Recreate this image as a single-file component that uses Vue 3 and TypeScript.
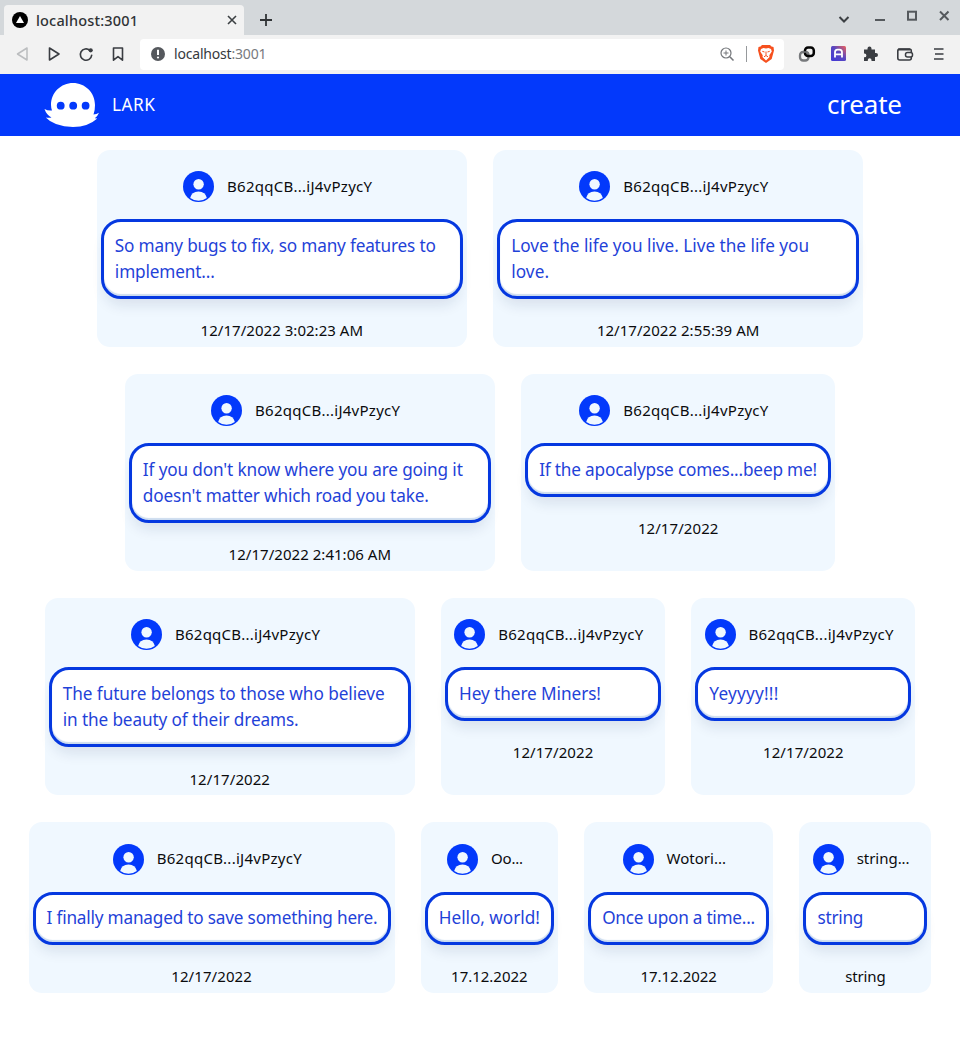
<script setup lang="ts">
interface Line { text: string; width: number }
interface Card { width: number; name: Line; lines: Line[]; date: Line }

const wallet: Line = { text: 'B62qqCB...iJ4vPzycY', width: 145 }
const shortDate: Line = { text: '12/17/2022', width: 80.5 }
const dottedDate: Line = { text: '17.12.2022', width: 76.5 }

const rows: Card[][] = [
  [
    { width: 370, name: wallet, lines: [{ text: 'So many bugs to fix, so many features to', width: 321 }, { text: 'implement...', width: 100 }], date: { text: '12/17/2022 3:02:23 AM', width: 162.5 } },
    { width: 370, name: wallet, lines: [{ text: 'Love the life you live. Live the life you', width: 298 }, { text: 'love.', width: 38 }], date: { text: '12/17/2022 2:55:39 AM', width: 162.5 } },
  ],
  [
    { width: 370, name: wallet, lines: [{ text: "If you don't know where you are going it", width: 320 }, { text: "doesn't matter which road you take.", width: 286 }], date: { text: '12/17/2022 2:41:06 AM', width: 162.5 } },
    { width: 314, name: wallet, lines: [{ text: 'If the apocalypse comes...beep me!', width: 278 }], date: shortDate },
  ],
  [
    { width: 370, name: wallet, lines: [{ text: 'The future belongs to those who believe', width: 322 }, { text: 'in the beauty of their dreams.', width: 236 }], date: shortDate },
    { width: 224, name: wallet, lines: [{ text: 'Hey there Miners!', width: 142 }], date: shortDate },
    { width: 224, name: wallet, lines: [{ text: 'Yeyyyy!!!', width: 69 }], date: shortDate },
  ],
  [
    { width: 366, name: wallet, lines: [{ text: 'I finally managed to save something here.', width: 331 }], date: shortDate },
    { width: 137, name: { text: 'Oo...', width: 32 }, lines: [{ text: 'Hello, world!', width: 101 }], date: dottedDate },
    { width: 189, name: { text: 'Wotori...', width: 59.5 }, lines: [{ text: 'Once upon a time...', width: 153 }], date: dottedDate },
    { width: 132, name: { text: 'string...', width: 53 }, lines: [{ text: 'string', width: 46 }], date: { text: 'string', width: 40.5 } },
  ],
]

// Tracks a line of text so that it occupies the requested width.
const vFit = (el: HTMLElement, binding: { value: number }) => {
  el.style.letterSpacing = '0px'
  const natural = el.getBoundingClientRect().width
  const count = (el.textContent ?? '').length
  const gap = (binding.value - natural) / Math.max(1, count - 1)
  el.style.letterSpacing = `${gap}px`
  el.style.marginRight = `${-gap}px`
}
</script>

<template>
  <div class="window">
    <div class="tabbar">
      <div class="tab">
        <svg class="favicon" width="16" height="16" viewBox="0 0 16 16"><circle cx="8" cy="8" r="8" fill="#000" /><path d="M8 4 12 11H4Z" fill="#fff" /></svg>
        <span class="tab-title"><span v-fit="102" class="fit">localhost:3001</span></span>
        <svg width="10" height="10" viewBox="0 0 10 10"><path d="M1 1 9 9M9 1 1 9" stroke="#3c4043" stroke-width="1.6" /></svg>
      </div>
      <svg class="plus" width="12" height="12" viewBox="0 0 12 12"><path d="M6 0V12M0 6H12" stroke="#303336" stroke-width="1.8" /></svg>
      <svg class="controls" width="112" height="20" viewBox="0 0 112 20" fill="none" stroke="#55595d" stroke-width="2">
        <path d="M1.5 12 6 16.5 10.500 12" stroke="#3c4043" />
        <path d="M37 15H47" /><rect x="70" y="6.700" width="8" height="8" /><path d="M102 6.500 110.500 15M110.500 6.500 102 15" />
      </svg>
    </div>

    <div class="toolbar">
      <svg class="nav" width="112" height="20" viewBox="0 0 112 20" fill="none" stroke-linejoin="round">
        <path d="M11 4V16L1.500 10Z" stroke="#bbbdbf" stroke-width="1.5" />
        <path d="M33.500 4V16L43 10Z" stroke="#3a3d42" stroke-width="1.6" />
        <path d="M73.800 6.300A5.700 5.700 0 1 0 75.700 11.200" stroke="#3a3d42" stroke-width="1.6" stroke-linecap="round" />
        <circle cx="74.700" cy="6.300" r="2.100" fill="#3a3d42" />
        <path d="M97.500 4H106.500V16.200L102 12.600 97.500 16.200Z" stroke="#3a3d42" stroke-width="1.6" />
      </svg>
      <div class="address">
        <svg width="14" height="14" viewBox="0 0 14 14"><circle cx="7" cy="7" r="7" fill="#55585d" /><path d="M7 2.800V8" stroke="#fff" stroke-width="2" /><circle cx="7" cy="10.500" r="1.100" fill="#fff" /></svg>
        <span class="url"><span v-fit="92.5" class="fit">localhost<span class="port">:3001</span></span></span>
        <svg class="magnify" width="15" height="15" viewBox="0 0 15 15" fill="none" stroke="#74777b"><circle cx="6" cy="6" r="5" stroke-width="1.200" /><path d="M9.800 9.800 13.500 13.500" stroke-width="1.600" /><path d="M3.500 6H8.500M6 3.500V8.500" /></svg>
        <span class="rule"></span>
        <svg class="shield" width="18" height="20" viewBox="0 0 18 20">
          <path d="M5 1H13L14.500 2.600 16.500 3 17 6.500 14.700 15 9 19 3.300 15 1 6.500 1.500 3 3.500 2.600Z" fill="#f6501e" />
          <path d="M4 5 6.500 4 9 4.500 11.500 4 14 5 14.800 7.500 12.300 11.300 12.500 13 9 16.500 5.500 13 5.700 11.300 3.200 7.500Z" fill="#fff" />
          <path d="M5.300 7.300 7.500 8M12.700 7.300 10.500 8M9 7.500V11.300M7 12.800 9 11.500 11 12.800" fill="none" stroke="#f6501e" stroke-width="1" />
        </svg>
      </div>
      <svg class="extensions" width="152" height="20" viewBox="0 0 152 20" fill="none">
        <rect x="2" y="8" width="8.500" height="8.500" rx="3.200" stroke="#77797c" stroke-width="2.300" />
        <rect x="7" y="3.500" width="8.800" height="8.500" rx="3" stroke="#050505" stroke-width="2.500" />
        <path d="M5 8H8.500Q10.500 8 10.500 10" stroke="#77797c" stroke-width="1.600" />
        <defs><linearGradient id="app-tile" x1="0" y1="1" x2="1" y2="0"><stop offset="0" stop-color="#4036d8" /><stop offset=".55" stop-color="#5a48c0" /><stop offset="1" stop-color="#f06058" /></linearGradient></defs>
        <rect x="33" y="2" width="15" height="15" rx="1.500" fill="url(#app-tile)" />
        <path d="M37 13.500V8.500Q37 5.700 39.500 5.700H41.500Q44 5.700 44 8.500V13.500M37 10.300H44" stroke="#fff" stroke-width="1.800" />
        <path d="M66 5.500H69.500V4.500A2 2 0 0 1 73.500 4.500V5.500H77V9H78A2 2 0 0 1 78 13H77V17H73.500V16A1.800 1.800 0 0 0 69.800 16V17H66V13.300H66.500A1.900 1.900 0 0 0 66.500 9.500H66Z" fill="#3a3d42" />
        <rect x="99.800" y="5" width="13.500" height="11" rx="2" stroke="#3a3d42" stroke-width="1.600" /><path d="M100 5.500H112" stroke="#3a3d42" stroke-width="2" /><rect x="107.500" y="8.500" width="7" height="4.500" rx="2" fill="#f2f2f2" stroke="#3a3d42" stroke-width="1.500" />
        <path d="M136 5H145.500M137 10H145.500M136 15H145.500" stroke="#3a3d42" stroke-width="1.500" />
      </svg>
    </div>

    <header class="appbar">
      <svg class="logo" width="56" height="46" viewBox="0 0 56 46">
        <path d="M29 1C41 1 51 10.500 51 23Q51 29 49.500 32.500Q52.500 32.300 55 30.800Q53.500 34.500 50.800 36.200L53.300 36.500Q44 45 29 45Q10 44.500 1.800 35.500Q5 36.200 7.500 35.500Q2.500 33 .500 27Q4 29 8 28.500Q7 25.500 7 23C7 10.500 17 1 29 1Z" fill="#fff" />
        <g fill="#0339fb"><circle cx="16.700" cy="23.700" r="3.900" /><circle cx="29.200" cy="23.700" r="3.900" /><circle cx="41.600" cy="23.700" r="3.900" /></g>
      </svg>
      <span class="brand"><span v-fit="43" class="fit">LARK</span></span>
      <span class="create"><span v-fit="75" class="fit">create</span></span>
    </header>

    <main class="feed">
      <section v-for="(row, r) in rows" :key="r" class="row">
        <article v-for="(card, c) in row" :key="c" class="card" :style="{ width: card.width + 'px' }">
          <div class="author">
            <svg width="31" height="31" viewBox="0 0 31 31"><circle cx="15.500" cy="15.500" r="15.500" fill="#0339fb" /><circle cx="15.600" cy="13.300" r="5.200" fill="#f0f8ff" /><path d="M7.200 27Q8.500 20.500 15.500 20.500T23.800 27Q20 29.800 15.500 29.800T7.200 27Z" fill="#f0f8ff" /></svg>
            <span class="name"><span v-fit="card.name.width" class="fit">{{ card.name.text }}</span></span>
          </div>
          <div class="bubble">
            <div v-for="line in card.lines" :key="line.text" class="line"><span v-fit="line.width" class="fit">{{ line.text }}</span></div>
          </div>
          <div class="date"><span v-fit="card.date.width" class="fit">{{ card.date.text }}</span></div>
        </article>
      </section>
    </main>
  </div>
</template>

<style>
body { margin: 0; background: #fff; }
</style>

<style scoped>
.window { width: 960px; height: 1043px; overflow: hidden; background: #fff; font-family: "Noto Sans", "Open Sans", sans-serif; color: #0b0b0d; }
.window svg { display: block; flex: none; }
.fit { display: inline-block; white-space: nowrap; }
.tabbar { height: 35px; box-sizing: border-box; padding: 5px 10px 0 4px; background: #d4d8db; display: flex; }
.tab { width: 240px; height: 30px; box-sizing: border-box; padding: 0 7px 0 8px; background: #f2f2f2; border-radius: 4px 4px 0 0; display: flex; align-items: center; }
.tab-title { flex: 1; margin-left: 8px; font-size: 14.500px; font-weight: 500; line-height: 20px; color: #303336; }
.plus { margin: 9px 0 0 16px; }
.controls { margin: 0 0 0 auto; }
.toolbar { height: 39px; box-sizing: border-box; padding: 4px 10px 4px 16px; background: #f2f2f2; display: flex; }
.nav { margin-top: 5px; }
.address { width: 644px; height: 31px; margin-left: 12px; box-sizing: border-box; padding: 0 9px 1px 11px; background: #fff; border-radius: 4px; display: flex; align-items: center; }
.url { margin-left: 9px; font-size: 14px; line-height: 20px; color: #36393d; }
.port { color: #777a7e; }
.magnify { margin-left: auto; }
.rule { width: 1px; height: 16px; margin: 0 10px 0 11px; background: #96999c; }
.extensions { margin: 5px 0 0 auto; }
.appbar { height: 62px; box-sizing: border-box; padding: 0 58px 0 44px; background: #0339fb; color: #fff; display: flex; align-items: center; }
.brand { margin-left: 12px; font-size: 17.200px; line-height: 24px; }
.create { margin: 0 0 2px auto; font-size: 26px; line-height: 36px; }
.feed { padding-top: 13.500px; display: flex; flex-direction: column; gap: 26.800px; }
.row { display: flex; justify-content: center; gap: 26.300px; }
.card { box-sizing: border-box; padding: 21.500px 4px 0; min-height: 171px; border-radius: 13px; background: #f0f8ff; }
.author { height: 31px; padding-right: 8.600px; display: flex; justify-content: center; align-items: center; gap: 13px; }
.name, .date { font-size: 15px; line-height: 22px; }
.name { margin-bottom: 2px; }
.bubble { margin-top: 17px; box-sizing: border-box; padding: 10.500px 11px; border: 3px solid #0538e0; border-radius: 20px; background: #fff; color: #1f42d8; font-size: 17.200px; box-shadow: inset 0 -2px 1px #ccdcef, 0 10px 14px -4px rgba(20, 40, 80, .11); }
.line { height: 26.400px; line-height: 26.400px; }
.date { height: 22px; margin-top: 20.500px; padding-bottom: 5.600px; text-align: center; }
</style>
